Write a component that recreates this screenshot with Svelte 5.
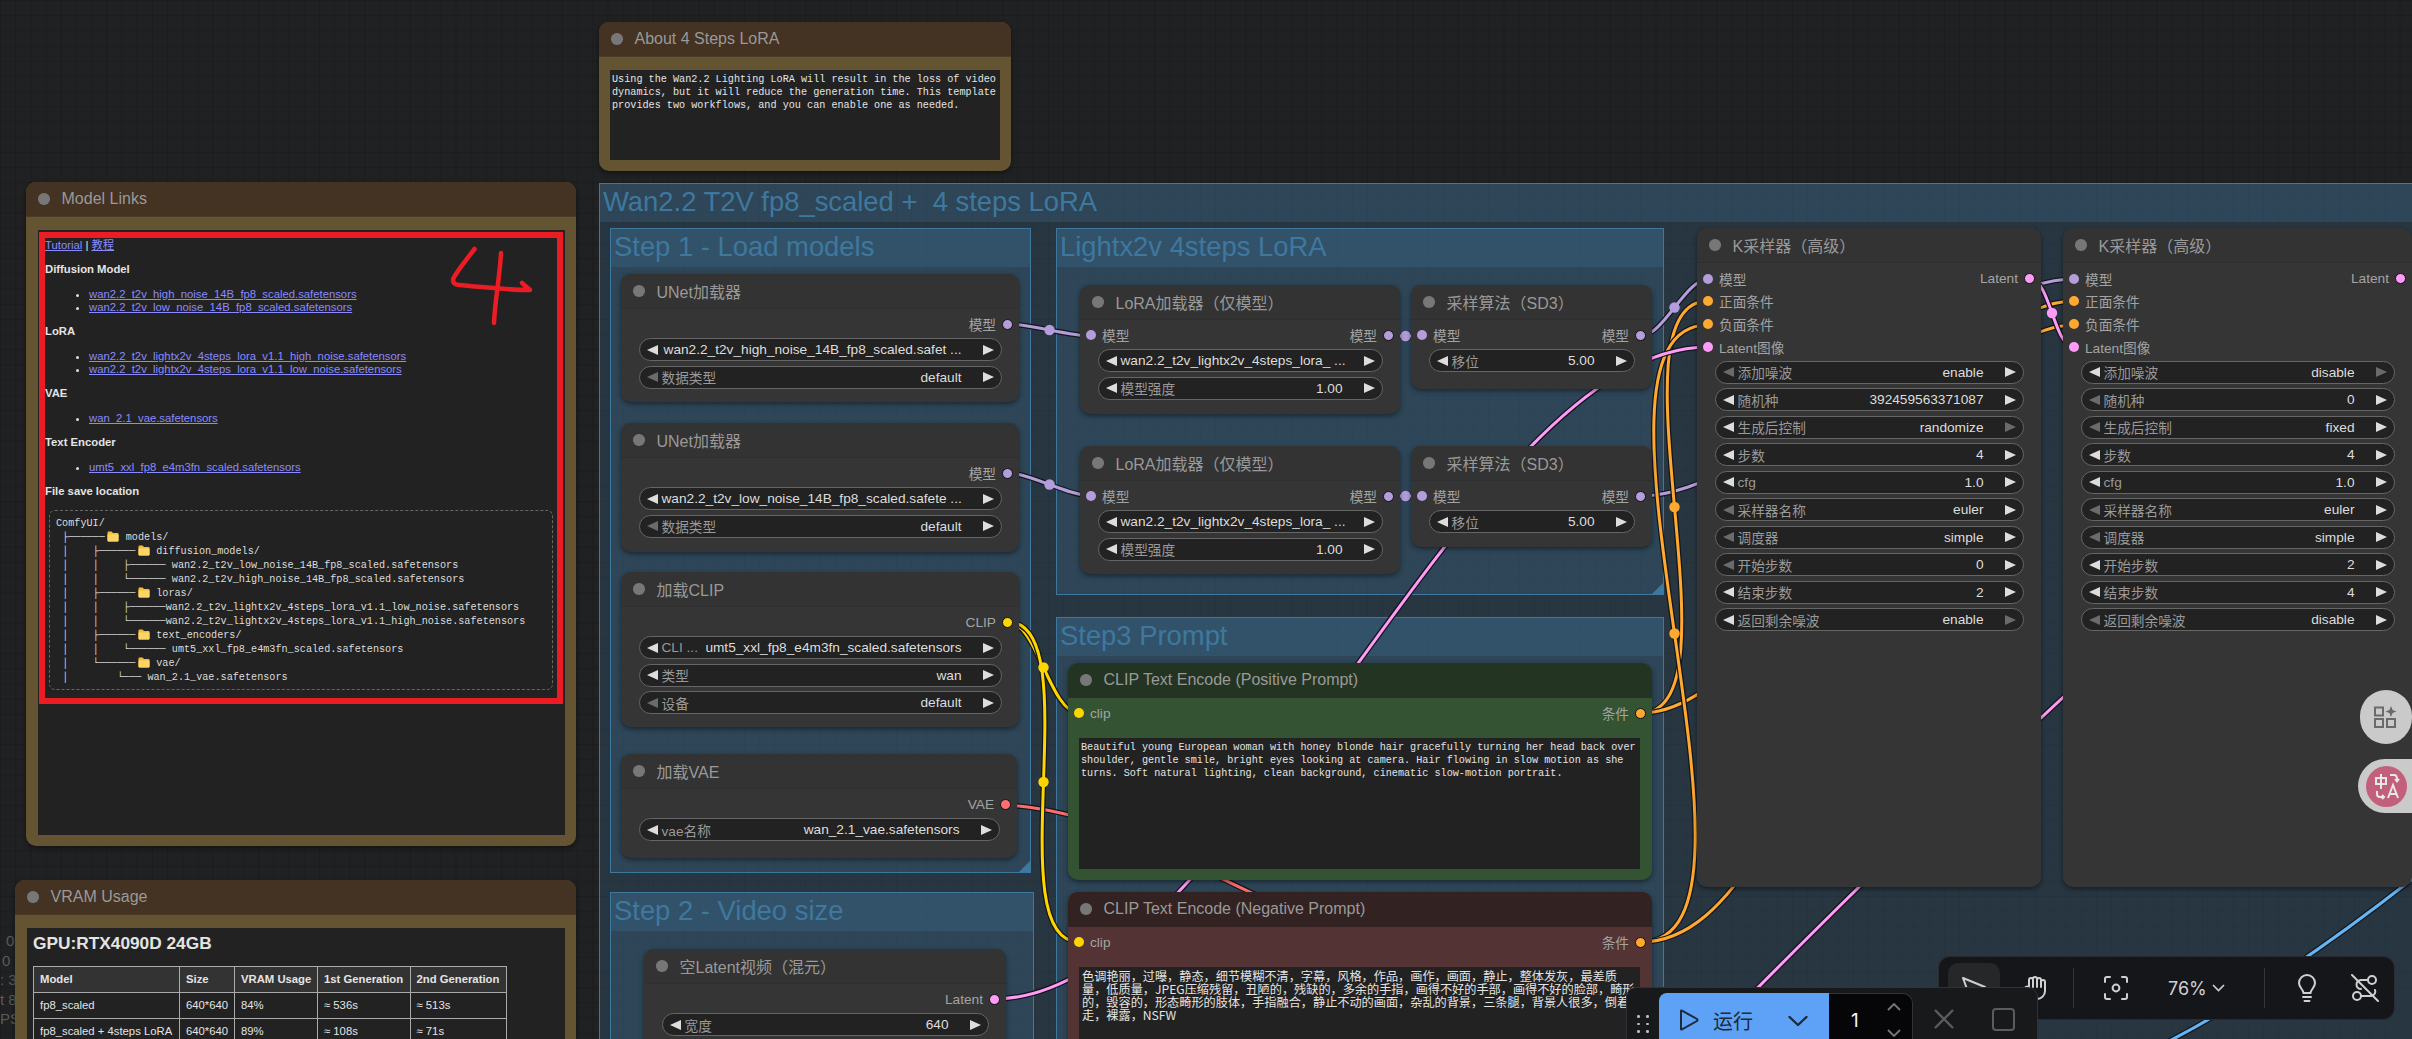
<script>
  // Link colours, same as the slot dots
  const MODEL = "#b39ddb";
  const CLIP = "#ffd500";
  const VAE = "#ff6e6e";
  const LATENT = "#ff9cf9";
  const COND = "#ffa931";

  // ComfyUI spline: control points sit a quarter of the distance out
  function spline(a, b) {
    const d = Math.hypot(b[0] - a[0], b[1] - a[1]) * 0.25;
    return `M${a[0]} ${a[1]} C${a[0] + d} ${a[1]} ${b[0] - d} ${b[1]} ${b[0]} ${b[1]}`;
  }

  const links = [
    [MODEL, [1008, 324], [1091, 336]],
    [MODEL, [1008, 473], [1091, 496]],
    [MODEL, [1389, 336], [1422, 336]],
    [MODEL, [1389, 496], [1422, 496]],
    [MODEL, [1641, 336], [1708, 279]],
    [MODEL, [1641, 496], [2074, 279]],
    [CLIP, [1008, 622], [1079, 713]],
    [CLIP, [1008, 622], [1079, 942]],
    [COND, [1641, 713], [1708, 301]],
    [COND, [1641, 713], [2074, 301]],
    [COND, [1641, 942], [1708, 325]],
    [COND, [1641, 942], [2074, 325]],
    [LATENT, [994, 999], [1708, 347]],
    [LATENT, [2030, 279], [2074, 347]],
  ].map(([color, a, b]) => ({
    color,
    d: spline(a, b),
    mx: (a[0] + b[0]) / 2,
    my: (a[1] + b[1]) / 2,
  }));

  // Links whose far end is off screen or hidden behind a node
  const freeLinks = [
    [VAE, "M1006 805 C1100 810 1180 860 1250 892 C1320 925 1400 980 1500 1100"],
    [LATENT, "M1640 1110 C1700 1045 1800 945 1859 887 C1920 830 2040 720 2200 570"],
    ["#64b5f6", "M2130 1060 C2220 1020 2330 945 2430 865"],
  ];

  const groups = [
    { x: 599, y: 183, w: 2000, h: 1000, title: "Wan2.2 T2V fp8_scaled +  4 steps LoRA" },
    { x: 610, y: 228, w: 421, h: 645, title: "Step 1 - Load models" },
    { x: 610, y: 892, w: 424, h: 300, title: "Step 2 - Video size" },
    { x: 1056, y: 228, w: 608, h: 367, title: "Lightx2v 4steps LoRA" },
    { x: 1056, y: 617, w: 608, h: 600, title: "Step3 Prompt" },
  ];

  // w(label, value, left arrow lit, right arrow lit)
  const w = (label, value, l = true, r = true) => ({ label, value, l, r });

  const sampler = (x, width, seed, ctrl, noise, start, end, ret, a) => ({
    x,
    y: 228,
    w: width,
    h: 659,
    title: "K采样器（高级）",
    inputs: [["模型", MODEL], ["正面条件", COND], ["负面条件", COND], ["Latent图像", LATENT]],
    outputs: [["Latent", LATENT]],
    tall: true,
    widgets: [
      w("添加噪波", noise, a[0], a[1]),
      w("随机种", seed, a[2], true),
      w("生成后控制", ctrl, a[3], a[4]),
      w("步数", "4"),
      w("cfg", "1.0"),
      w("采样器名称", "euler", false),
      w("调度器", "simple", false),
      w("开始步数", start, a[5]),
      w("结束步数", end),
      w("返回剩余噪波", ret, a[6], a[7]),
    ],
  });

  const nodes = [
    {
      x: 621, y: 274, w: 398, h: 128, title: "UNet加载器",
      outputs: [["模型", MODEL]],
      widgets: [w("", "wan2.2_t2v_high_noise_14B_fp8_scaled.safet ..."), w("数据类型", "default", false)],
    },
    {
      x: 621, y: 423, w: 398, h: 129, title: "UNet加载器",
      outputs: [["模型", MODEL]],
      widgets: [w("", "wan2.2_t2v_low_noise_14B_fp8_scaled.safete ..."), w("数据类型", "default", false)],
    },
    {
      x: 621, y: 572, w: 398, h: 155, title: "加载CLIP",
      outputs: [["CLIP", CLIP]],
      widgets: [w("CLI ...", "umt5_xxl_fp8_e4m3fn_scaled.safetensors"), w("类型", "wan"), w("设备", "default", false)],
    },
    {
      x: 621, y: 754, w: 396, h: 104, title: "加载VAE",
      outputs: [["VAE", VAE]],
      widgets: [w("vae名称", "wan_2.1_vae.safetensors")],
    },
    {
      x: 644, y: 949, w: 362, h: 160, title: "空Latent视频（混元）",
      outputs: [["Latent", LATENT]],
      widgets: [w("宽度", "640")],
    },
    {
      x: 1080, y: 285, w: 320, h: 129, title: "LoRA加载器（仅模型）",
      inputs: [["模型", MODEL]], outputs: [["模型", MODEL]],
      widgets: [w("", "wan2.2_t2v_lightx2v_4steps_lora_ ..."), w("模型强度", "1.00")],
    },
    {
      x: 1080, y: 446, w: 320, h: 128, title: "LoRA加载器（仅模型）",
      inputs: [["模型", MODEL]], outputs: [["模型", MODEL]],
      widgets: [w("", "wan2.2_t2v_lightx2v_4steps_lora_ ..."), w("模型强度", "1.00")],
    },
    {
      x: 1411, y: 285, w: 241, h: 104, title: "采样算法（SD3）",
      inputs: [["模型", MODEL]], outputs: [["模型", MODEL]],
      widgets: [w("移位", "5.00")],
    },
    {
      x: 1411, y: 446, w: 241, h: 101, title: "采样算法（SD3）",
      inputs: [["模型", MODEL]], outputs: [["模型", MODEL]],
      widgets: [w("移位", "5.00")],
    },
    sampler(1697, 344, "392459563371087", "randomize", "enable", "0", "2", "enable",
      [false, true, true, true, false, false, true, false]),
    sampler(2063, 349, "0", "fixed", "disable", "2", "4", "disable",
      [true, false, false, false, true, true, false, true]),
  ];

  const prompts = [
    {
      y: 663, h: 217, theme: "green", title: "CLIP Text Encode (Positive Prompt)",
      text: [
        "Beautiful young European woman with honey blonde hair gracefully turning her head back over",
        "shoulder, gentle smile, bright eyes looking at camera. Hair flowing in slow motion as she",
        "turns. Soft natural lighting, clean background, cinematic slow-motion portrait.",
      ],
    },
    {
      y: 892, h: 220, theme: "red", title: "CLIP Text Encode (Negative Prompt)",
      cjk: true,
      text: [
        "色调艳丽，过曝，静态，细节模糊不清，字幕，风格，作品，画作，画面，静止，整体发灰，最差质",
        "量，低质量，JPEG压缩残留，丑陋的，残缺的，多余的手指，画得不好的手部，画得不好的脸部，畸形",
        "的，毁容的，形态畸形的肢体，手指融合，静止不动的画面，杂乱的背景，三条腿，背景人很多，倒着",
        "走，裸露，NSFW",
      ],
    },
  ];

  const linkSections = [
    { head: "Diffusion Model", files: ["wan2.2_t2v_high_noise_14B_fp8_scaled.safetensors", "wan2.2_t2v_low_noise_14B_fp8_scaled.safetensors"] },
    { head: "LoRA", files: ["wan2.2_t2v_lightx2v_4steps_lora_v1.1_high_noise.safetensors", "wan2.2_t2v_lightx2v_4steps_lora_v1.1_low_noise.safetensors"] },
    { head: "VAE", files: ["wan_2.1_vae.safetensors"] },
    { head: "Text Encoder", files: ["umt5_xxl_fp8_e4m3fn_scaled.safetensors"] },
  ];

  const tree = [
    { p: "ComfyUI/" },
    { p: " ├──────", f: true, t: "models/" },
    { p: " │    ├──────", f: true, t: "diffusion_models/" },
    { p: " │    │    ├────── wan2.2_t2v_low_noise_14B_fp8_scaled.safetensors" },
    { p: " │    │    └────── wan2.2_t2v_high_noise_14B_fp8_scaled.safetensors" },
    { p: " │    ├──────", f: true, t: "loras/" },
    { p: " │    │    ├──────wan2.2_t2v_lightx2v_4steps_lora_v1.1_low_noise.safetensors" },
    { p: " │    │    └──────wan2.2_t2v_lightx2v_4steps_lora_v1.1_high_noise.safetensors" },
    { p: " │    ├──────", f: true, t: "text_encoders/" },
    { p: " │    │    └────── umt5_xxl_fp8_e4m3fn_scaled.safetensors" },
    { p: " │    └──────", f: true, t: "vae/" },
    { p: " │        └─── wan_2.1_vae.safetensors" },
  ];

  const vramRows = [
    ["fp8_scaled", "640*640", "84%", "≈ 536s", "≈ 513s"],
    ["fp8_scaled + 4steps LoRA", "640*640", "89%", "≈ 108s", "≈ 71s"],
  ];
</script>

{#snippet widget(item)}
  <div class="widget">
    <span class="arrow left" class:off={!item.l}></span>
    <span class="wlabel">{item.label}</span>
    <span class="wvalue">{item.value}</span>
    <span class="arrow right" class:off={!item.r}></span>
  </div>
{/snippet}

{#snippet header(title)}
  <div class="head"><span class="dot"></span><span class="title">{title}</span></div>
{/snippet}

<div class="canvas">
  <div class="stats">
    <div class="s0">0</div>
    <div class="s1">0</div>
    <div>: 3</div>
    <div>t 8</div>
    <div>PS</div>
  </div>

  {#each groups as g}
    <section class="group" style="left:{g.x}px;top:{g.y}px;width:{g.w}px;height:{g.h}px">
      <h2>{g.title}</h2>
      <span class="corner"></span>
    </section>
  {/each}

  <svg class="links" width="2412" height="1039" viewBox="0 0 2412 1039" fill="none">
    {#each freeLinks as [color, d]}
      <path {d} stroke="#14161a" stroke-width="5.5" />
      <path {d} stroke={color} stroke-width="3" />
    {/each}
    {#each links as l}
      <path d={l.d} stroke="#14161a" stroke-width="5.5" />
      <path d={l.d} stroke={l.color} stroke-width="3" />
    {/each}
    {#each links as l}
      <circle cx={l.mx} cy={l.my} r="5.2" fill={l.color} />
    {/each}
  </svg>

  <article class="node note" style="left:599px;top:22px;width:412px;height:149px">
    {@render header("About 4 Steps LoRA")}
    <div class="notebody about">
      <p class="mono">Using the Wan2.2 Lighting LoRA will result in the loss of video</p>
      <p class="mono">dynamics, but it will reduce the generation time. This template</p>
      <p class="mono">provides two workflows, and you can enable one as needed.</p>
    </div>
  </article>

  <article class="node note" style="left:26px;top:182px;width:550px;height:664px">
    {@render header("Model Links")}
    <div class="notebody md">
      <p><a href="#tutorial">Tutorial</a> | <a href="#zh">教程</a></p>
      {#each linkSections as s}
        <p><b>{s.head}</b></p>
        <ul>
          {#each s.files as f}
            <li><a href="#{f}">{f}</a></li>
          {/each}
        </ul>
      {/each}
      <p><b>File save location</b></p>
      <div class="tree">
        {#each tree as line}
          <div class="treeline">{line.p}{#if line.f}<svg class="folder" width="12" height="11" viewBox="0 0 12 11"><path d="M0.5 1.6 Q0.5 0.6 1.5 0.6 H4.6 L6 2 H10.5 Q11.5 2 11.5 3 V9.4 Q11.5 10.4 10.5 10.4 H1.5 Q0.5 10.4 0.5 9.4 Z" fill="#f6bd3b" /><path d="M0.5 3.6 H11.5 V9.4 Q11.5 10.4 10.5 10.4 H1.5 Q0.5 10.4 0.5 9.4 Z" fill="#fdd663" /></svg>{line.t}{/if}</div>
        {/each}
      </div>
    </div>
  </article>

  <article class="node note" style="left:15px;top:880px;width:561px;height:300px">
    {@render header("VRAM Usage")}
    <div class="notebody md vram">
      <h3>GPU:RTX4090D 24GB</h3>
      <table>
        <colgroup><col class="c1" /><col class="c2" /><col class="c3" /><col class="c4" /><col class="c5" /></colgroup>
        <thead>
          <tr><th>Model</th><th>Size</th><th>VRAM Usage</th><th>1st Generation</th><th>2nd Generation</th></tr>
        </thead>
        <tbody>
          {#each vramRows as row}
            <tr>{#each row as cell}<td>{cell}</td>{/each}</tr>
          {/each}
        </tbody>
      </table>
    </div>
  </article>

  {#each nodes as n}
    <article class="node" style="left:{n.x}px;top:{n.y}px;width:{n.w}px;height:{n.h}px">
      {@render header(n.title)}
      <div class="nodebody" class:tall={n.tall}>
        <div class="slots">
          <div class="slotcol">
            {#each n.inputs ?? [] as [label, color]}
              <div class="slot"><i style="background:{color}"></i>{label}</div>
            {/each}
          </div>
          <div class="slotcol end">
            {#each n.outputs ?? [] as [label, color]}
              <div class="slot">{label}<i class="out" style="background:{color}"></i></div>
            {/each}
          </div>
        </div>
        <div class="widgets">
          {#each n.widgets as item}
            {@render widget(item)}
          {/each}
        </div>
      </div>
    </article>
  {/each}

  {#each prompts as n}
    <article class="node {n.theme}" style="left:1068px;top:{n.y}px;width:584px;height:{n.h}px">
      {@render header(n.title)}
      <div class="nodebody prompt">
        <div class="slots">
          <div class="slot"><i style="background:{CLIP}"></i>clip</div>
          <div class="slot">条件<i class="out" style="background:{COND}"></i></div>
        </div>
        <div class="textbox" class:cjk={n.cjk}>
          {#each n.text as line}<p>{line}</p>{/each}
        </div>
      </div>
    </article>
  {/each}

  <!-- red marker annotation drawn over the links note -->
  <div class="redbox"></div>
  <svg class="scribble" width="110" height="90" viewBox="440 240 110 90" fill="none">
    <path d="M474.5 249 C466 260 458 270 453.5 278 C452 283 455 285 460 285 C480 287 510 290 530 290 L522 283" stroke="#ec1c24" stroke-width="4.5" stroke-linecap="round" stroke-linejoin="round" />
    <path d="M501 253 C500 275 495 300 494 323" stroke="#ec1c24" stroke-width="4.5" stroke-linecap="round" />
  </svg>

  <div class="side first">
    <svg width="24" height="24" viewBox="0 0 24 24" fill="none" stroke="#6a6a6a" stroke-width="2">
      <rect x="2" y="2.5" width="8" height="8" /><rect x="2" y="14" width="8" height="8" /><rect x="14" y="14" width="8" height="8" />
      <path d="M18 1 L19.6 4.9 L23.5 6.5 L19.6 8.1 L18 12 L16.4 8.1 L12.5 6.5 L16.4 4.9 Z" fill="#6a6a6a" stroke="none" />
    </svg>
  </div>
  <div class="side second">
    <span class="translate">
      <svg width="30" height="30" viewBox="0 0 30 30" fill="none" stroke="#e8e8e8" stroke-width="2">
        <path d="M4 7 H14 V13 H4 Z M9 3 V18" />
        <path d="M18 4 H22 Q25 4 25 8 V10 M23 8 L25 10.5 L27 8" />
        <path d="M5 20 V23 Q5 26 8 26 H12 M10 24 L12 26 L10 28" />
        <path d="M16 27 L21 14 L26 27 M18 23 H24" />
      </svg>
    </span>
  </div>

  <div class="canvasmenu">
    <span class="tool active">
      <svg width="26" height="26" viewBox="0 0 26 26" fill="none" stroke="#d0d0d0" stroke-width="2" stroke-linejoin="round"><path d="M2 3 L24 12 L14 15 L10 25 Z" /></svg>
    </span>
    <span class="tool hand">
      <svg width="24" height="26" viewBox="0 0 24 26" fill="none" stroke="#d0d0d0" stroke-width="2" stroke-linecap="round" stroke-linejoin="round"><path d="M6 13 V5 a2 2 0 0 1 4 0 V12 M10 4 a2 2 0 0 1 4 0 V12 M14 5 a2 2 0 0 1 4 0 V12 M18 7 a2 2 0 0 1 4 0 V16 a8 8 0 0 1 -8 8 H12 C8 24 6 22 4 19 L2 15 a2 2 0 0 1 4 -2" /></svg>
    </span>
    <span class="sep"></span>
    <svg class="fit" width="24" height="24" viewBox="0 0 24 24" fill="none" stroke="#d0d0d0" stroke-width="2" stroke-linecap="round"><path d="M1 6 V3 a2 2 0 0 1 2 -2 H6 M18 1 H21 a2 2 0 0 1 2 2 V6 M23 18 V21 a2 2 0 0 1 -2 2 H18 M6 23 H3 a2 2 0 0 1 -2 -2 V18" /><circle cx="12" cy="12" r="3.4" /></svg>
    <span class="zoomlevel">76%</span>
    <svg class="zoomchev" width="13" height="8" viewBox="0 0 13 8" fill="none" stroke="#d0d0d0" stroke-width="1.6"><path d="M1 1 L6.5 6.5 L12 1" /></svg>
    <span class="sep second"></span>
    <svg class="bulb" width="18" height="28" viewBox="0 0 18 28" fill="none" stroke="#d0d0d0" stroke-width="2" stroke-linecap="round"><path d="M5.5 19 C5 15 1 13.5 1 9 a8 8 0 0 1 16 0 C17 13.5 13 15 12.5 19 Z" /><path d="M5 23 H13 M6.5 27 H11.5" /></svg>
    <svg class="linkoff" width="28" height="28" viewBox="0 0 28 28" fill="none" stroke="#d0d0d0" stroke-width="2" stroke-linecap="round"><circle cx="21" cy="6" r="4" /><circle cx="6" cy="22" r="4" /><path d="M17 6 H10 a4.5 4.5 0 0 0 0 9 M10 22 H20 a4.5 4.5 0 0 0 4 -6 M1 1 L27 27" /></svg>
  </div>

  <div class="runbar">
    <span class="grip">{#each Array(6) as _}<i></i>{/each}</span>
    <button class="run">
      <svg class="play" width="20" height="22" viewBox="0 0 20 22" fill="none" stroke="#1d2a38" stroke-width="2" stroke-linejoin="round"><path d="M2 2 Q2 1 3 1.6 L18 10 Q19 11 18 12 L3 20.4 Q2 21 2 20 Z" /></svg>
      <span class="runlabel">运行</span>
      <svg class="runchev" width="20" height="10" viewBox="0 0 20 10" fill="none" stroke="#1d2a38" stroke-width="2.4" stroke-linecap="round" stroke-linejoin="round"><path d="M1.5 1 L10 9 L18.5 1" /></svg>
    </button>
    <div class="count">
      <span>1</span>
      <span class="steppers">
        <svg width="14" height="8" viewBox="0 0 14 8" fill="none" stroke="#777" stroke-width="1.8"><path d="M1 7 L7 1 L13 7" /></svg>
        <svg width="14" height="8" viewBox="0 0 14 8" fill="none" stroke="#777" stroke-width="1.8"><path d="M1 1 L7 7 L13 1" /></svg>
      </span>
    </div>
    <svg class="cancel" width="20" height="20" viewBox="0 0 20 20" fill="none" stroke="#5c5c5c" stroke-width="2.4"><path d="M1 1 L19 19 M19 1 L1 19" /></svg>
    <span class="stop"></span>
  </div>
</div>

<style>
  :global(body) {
    margin: 0;
    background: #202122;
  }

  .canvas {
    position: relative;
    width: 2412px;
    height: 1039px;
    overflow: hidden;
    font-family: "Liberation Sans", "Noto Sans CJK SC", sans-serif;
    background-color: #202122;
    background-image:
      linear-gradient(rgba(0, 0, 0, 0.13) 1px, transparent 1px),
      linear-gradient(90deg, rgba(0, 0, 0, 0.13) 1px, transparent 1px);
    background-size: 15.2px 15.2px;
  }

  .stats {
    position: absolute;
    left: 0;
    top: 931px;
    width: 14px;
    color: #5a5a5a;
    font-size: 15px;
    line-height: 19.6px;
    white-space: nowrap;
  }
  .stats .s0 {
    padding-left: 6px;
  }
  .stats .s1 {
    padding-left: 2px;
  }

  /* groups */
  .group {
    position: absolute;
    box-sizing: border-box;
    border: 1.5px solid #3f789e;
    background: rgba(63, 120, 158, 0.25);
  }
  .group h2 {
    margin: 0;
    height: 38px;
    padding-left: 3px;
    background: rgba(63, 120, 158, 0.25);
    color: #3f789e;
    font-size: 27.4px;
    font-weight: 400;
    line-height: 35px;
    white-space: pre;
  }
  .group .corner {
    position: absolute;
    right: 0;
    bottom: 0;
    width: 0;
    height: 0;
    border-style: solid;
    border-width: 0 0 11px 11px;
    border-color: transparent transparent #3f789e transparent;
  }

  .links {
    position: absolute;
    left: 0;
    top: 0;
  }

  /* nodes */
  .node {
    position: absolute;
    display: flex;
    flex-direction: column;
    border-radius: 10px;
    background: #353535;
    box-shadow: 0 2px 5px rgba(0, 0, 0, 0.45);
    overflow: hidden;
  }
  .head {
    flex: none;
    display: flex;
    align-items: center;
    gap: 12px;
    height: 35px;
    padding-left: 12px;
    background: #333;
    border-bottom: 1px solid #2f2f2f;
    box-sizing: border-box;
  }
  .dot {
    flex: none;
    width: 11.5px;
    height: 11.5px;
    border-radius: 50%;
    background: #777;
  }
  .title {
    color: #999;
    font-size: 16px;
    white-space: nowrap;
  }
  .note .head {
    background: #443223;
    border-bottom-color: #4c3b27;
  }
  .note {
    background: #655432;
  }
  .green {
    background: #345332;
  }
  .green .head {
    background: #233522;
    border-bottom-color: #233522;
  }
  .red {
    background: #533333;
  }
  .red .head {
    background: #322222;
    border-bottom-color: #322222;
  }

  .nodebody {
    display: flex;
    flex-direction: column;
    padding-top: 7px;
  }
  .nodebody.tall {
    padding-top: 7.5px;
  }
  .slots {
    display: flex;
    justify-content: space-between;
    padding: 0 6px;
  }
  .slotcol {
    display: flex;
    flex-direction: column;
    gap: 6.8px;
  }
  .slotcol.end {
    align-items: flex-end;
  }
  .slot {
    display: flex;
    align-items: center;
    gap: 6px;
    height: 16px;
    color: #a3a3a3;
    font-size: 13.68px;
    white-space: nowrap;
  }
  .slot i {
    flex: none;
    width: 10px;
    height: 10px;
    border-radius: 50%;
  }
  .slot i.out {
    box-sizing: border-box;
    width: 11px;
    height: 11px;
    border: 1px solid #111;
  }

  .widgets {
    display: flex;
    flex-direction: column;
    gap: 4.5px;
    padding: 6px 17.5px 0;
  }
  .widget {
    flex: none;
    box-sizing: border-box;
    display: flex;
    align-items: center;
    height: 23px;
    padding: 0 7px;
    border: 1px solid #666;
    border-radius: 12px;
    background: #222;
    font-size: 13.68px;
    white-space: nowrap;
  }
  .wlabel {
    flex: none;
    margin-left: 4px;
    color: #999;
  }
  .wvalue {
    flex: 1;
    min-width: 0;
    margin-right: 21px;
    color: #ddd;
    text-align: right;
  }
  .arrow {
    flex: none;
    width: 0;
    height: 0;
    border-style: solid;
  }
  .arrow.left {
    border-width: 5.5px 11px 5.5px 0;
    border-color: transparent #ddd transparent transparent;
  }
  .arrow.right {
    border-width: 5.5px 0 5.5px 11px;
    border-color: transparent transparent transparent #ddd;
  }
  .arrow.left.off {
    border-right-color: #6b6b6b;
  }
  .arrow.right.off {
    border-left-color: #6b6b6b;
  }

  /* prompt nodes */
  .prompt {
    flex: 1;
    min-height: 0;
    padding: 7px 12px 11px 0;
  }
  .prompt .slots {
    padding: 0 0 0 6px;
    margin-right: -6px;
  }
  .textbox {
    flex: 1;
    min-height: 0;
    margin: 17px 0 0 11px;
    padding: 3px 2px;
    background: #222;
    color: #e4e4e4;
    font-family: "Liberation Mono", "Noto Sans CJK SC", monospace;
    font-size: 10.16px;
    line-height: 13px;
  }
  .textbox p {
    margin: 0;
    height: 13px;
    white-space: pre;
  }
  .textbox.cjk {
    font-family: "Noto Sans CJK SC", "Liberation Mono", monospace;
    font-size: 12.16px;
    padding-left: 3px;
  }

  /* markdown / note bodies */
  .notebody {
    flex: 1;
    min-height: 0;
    margin: 13px 11px 11px 12px;
    background: #222;
    color: #e4e4e4;
  }
  .about {
    margin: 13px 11px 11px 11px;
    padding: 2.5px 2px;
  }
  .mono {
    margin: 0;
    font-family: "Liberation Mono", monospace;
    font-size: 10.16px;
    line-height: 13px;
    white-space: pre;
  }
  .md {
    padding: 8.5px 7px 0;
    font-size: 11.3px;
    line-height: 13px;
  }
  .md p {
    margin: 0 0 11.5px;
  }
  .md a {
    color: #8a8aff;
  }
  .md ul {
    margin: 0 0 11.5px;
    padding-left: 44px;
  }
  .md li::marker {
    color: #ddd;
  }
  .tree {
    box-sizing: border-box;
    width: 504px;
    height: 180px;
    margin-left: 4px;
    padding: 6.4px 6px 0;
    border: 1px dashed #666;
    border-radius: 6px;
    font-family: "Liberation Mono", monospace;
    font-size: 10.16px;
    line-height: 14.05px;
    color: #ddd;
  }
  .treeline {
    height: 14.05px;
    white-space: pre;
  }
  .folder {
    margin: 0 6.5px 0 2.5px;
    vertical-align: -2px;
  }
  .vram {
    margin-left: 12px;
    padding: 7px 6px 0;
  }
  .vram h3 {
    margin: 0 0 14px;
    height: 17px;
    font-size: 17.3px;
    line-height: 17px;
  }
  .vram table {
    table-layout: fixed;
    width: 473px;
    border-collapse: collapse;
    border: 1.5px solid #999;
  }
  .vram .c1 { width: 146px; }
  .vram .c2 { width: 55px; }
  .vram .c3 { width: 83px; }
  .vram .c4 { width: 92.5px; }
  .vram .c5 { width: 96.5px; }
  .vram th,
  .vram td {
    height: 25px;
    padding: 0 0 0 6px;
    border: 1px solid #aaa;
    text-align: left;
    white-space: nowrap;
  }
  .vram th {
    background: #333;
  }

  /* annotation */
  .redbox {
    position: absolute;
    left: 39px;
    top: 232px;
    width: 512px;
    height: 460px;
    border: 6px solid #ec1c24;
  }
  .scribble {
    position: absolute;
    left: 440px;
    top: 240px;
  }

  /* floating side buttons */
  .side {
    position: absolute;
    display: flex;
    align-items: center;
    height: 54px;
    background: #cacaca;
    border-radius: 27px 0 0 27px;
  }
  .side.first {
    left: 2360px;
    top: 690px;
    width: 52px;
    padding-left: 13px;
    box-sizing: border-box;
    border-radius: 27px;
  }
  .side.second {
    left: 2358px;
    top: 759px;
    width: 54px;
  }
  .translate {
    display: grid;
    place-items: center;
    width: 41px;
    height: 41px;
    margin-left: 8px;
    border-radius: 50%;
    background: #c2607c;
  }

  /* bottom right canvas menu */
  .canvasmenu {
    position: absolute;
    left: 1938px;
    top: 956px;
    width: 457px;
    height: 64px;
    box-sizing: border-box;
    display: flex;
    align-items: center;
    padding-left: 9px;
    border: 1px solid #2a2c30;
    border-radius: 12px;
    background: #15161a;
    color: #d0d0d0;
  }
  .tool {
    display: grid;
    place-items: center;
    width: 52px;
    height: 50px;
    border-radius: 10px;
  }
  .tool.active {
    background: #262729;
  }
  .tool.hand {
    margin-left: 9px;
  }
  .sep {
    width: 1px;
    height: 40px;
    margin-left: 12px;
    background: #33353a;
  }
  .sep.second {
    margin-left: 39px;
  }
  .fit {
    margin-left: 30px;
  }
  .zoomlevel {
    margin-left: 40px;
    font-family: Inter, "Liberation Sans", sans-serif;
    font-size: 18px;
  }
  .zoomchev {
    margin-left: 5px;
  }
  .bulb {
    margin-left: 33px;
  }
  .linkoff {
    margin-left: 35px;
  }

  /* run queue bar */
  .runbar {
    position: absolute;
    left: 1626px;
    top: 987px;
    width: 412px;
    height: 70px;
    box-sizing: border-box;
    display: flex;
    padding: 5px 0 0 10px;
    border: 1px solid #303236;
    border-radius: 10px;
    background: #18191b;
  }
  .grip {
    display: grid;
    grid-template-columns: 2px 2px;
    grid-auto-rows: 2px;
    column-gap: 7px;
    row-gap: 5.5px;
    width: 22px;
    margin-top: 22px;
  }
  .grip i {
    width: 2.5px;
    height: 2.5px;
    border-radius: 50%;
    background: #bbb;
  }
  .run {
    display: flex;
    align-items: flex-start;
    width: 170px;
    height: 60px;
    padding: 16px 0 0 20px;
    box-sizing: border-box;
    border: none;
    border-radius: 8px 0 0 0;
    background: #5ea2f7;
    color: #1d2a38;
    font-family: "Noto Sans CJK SC", sans-serif;
  }
  .runlabel {
    margin-left: 14px;
    font-size: 20px;
    line-height: 24px;
  }
  .runchev {
    margin: 7px 0 0 35px;
  }
  .count {
    display: flex;
    box-sizing: border-box;
    justify-content: space-between;
    width: 84px;
    height: 60px;
    padding: 15px 11px 0 22px;
    border: 1px solid #333;
    border-left: none;
    border-radius: 0 10px 0 0;
    background: #060608;
    color: #f4f4f4;
    font-family: Inter, "Liberation Sans", sans-serif;
    font-size: 19px;
    line-height: 24px;
  }
  .steppers {
    display: flex;
    flex-direction: column;
    gap: 18px;
    margin-top: -6px;
  }
  .cancel {
    margin: 16px 0 0 21px;
  }
  .stop {
    box-sizing: border-box;
    width: 23px;
    height: 23px;
    margin: 15px 0 0 38px;
    border: 2.4px solid #5c5c5c;
    border-radius: 4px;
  }
</style>
